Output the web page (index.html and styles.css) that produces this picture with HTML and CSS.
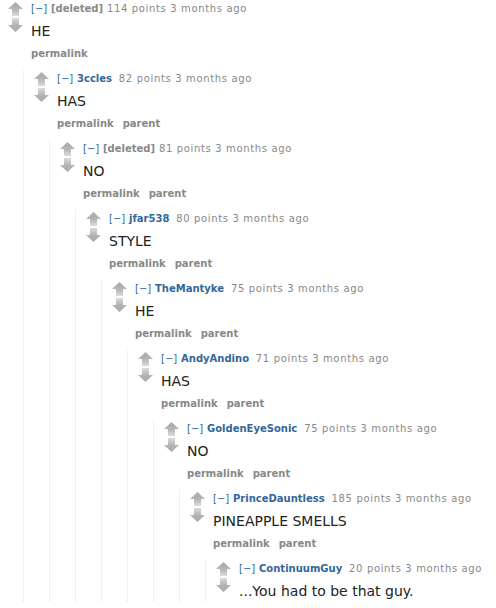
FILE: index.html
```html
<!DOCTYPE html>
<html lang="en">
<head>
  <meta charset="UTF-8" />
  <meta name="viewport" content="width=device-width, initial-scale=1.0"/>
  <title>Comment thread</title>
  <link rel="stylesheet" href="styles.css">
</head>
<body>
  <svg width="0" height="0" class="defs">
    <defs>
      <linearGradient id="upGrad" x1="0" y1="0" x2="0" y2="1">
        <stop offset="0" stop-color="#a9a9a9"/>
        <stop offset="0.5" stop-color="#b4b4b4"/>
        <stop offset="1" stop-color="#dcdcdc"/>
      </linearGradient>
      <linearGradient id="downGrad" x1="0" y1="0" x2="0" y2="1">
        <stop offset="0" stop-color="#dcdcdc"/>
        <stop offset="0.5" stop-color="#b4b4b4"/>
        <stop offset="1" stop-color="#a9a9a9"/>
      </linearGradient>
      <symbol id="up" viewBox="0 0 15 14">
        <polygon points="7.5,0 15,7 11,7 11,14 4,14 4,7 0,7" fill="url(#upGrad)"/>
      </symbol>
      <symbol id="down" viewBox="0 0 15 14">
        <polygon points="4,0 11,0 11,7 15,7 7.5,14 0,7 4,7" fill="url(#downGrad)"/>
      </symbol>
    </defs>
  </svg>

  <div class="thread" id="thread"></div>

  <script>
    // comment chain, each one replies to the one before
    const comments = [
      { author: null, points: 114, body: 'HE' },
      { author: '3ccles', points: 82, body: 'HAS' },
      { author: null, points: 81, body: 'NO' },
      { author: 'jfar538', points: 80, body: 'STYLE' },
      { author: 'TheMantyke', points: 75, body: 'HE' },
      { author: 'AndyAndino', points: 71, body: 'HAS' },
      { author: 'GoldenEyeSonic', points: 75, body: 'NO' },
      { author: 'PrinceDauntless', points: 185, body: 'PINEAPPLE SMELLS' },
      { author: 'ContinuumGuy', points: 20, body: '...You had to be that guy.' }
    ];

    function renderComment(i) {
      const c = comments[i];
      const last = i === comments.length - 1;
      const who = c.author
        ? `<a class="author">${c.author}</a>`
        : `<span class="deleted">[deleted]</span>`;
      let links = '';
      if (!last) {
        links = i === 0
          ? '<ul class="buttons"><li>permalink</li></ul>'
          : '<ul class="buttons"><li>permalink</li><li>parent</li></ul>';
      }
      const child = last ? '' : `<div class="child">${renderComment(i + 1)}</div>`;
      return `
        <div class="comment">
          <div class="thing">
            <div class="midcol">
              <svg class="arrow"><use href="#up"/></svg>
              <svg class="arrow"><use href="#down"/></svg>
            </div>
            <div class="entry">
              <p class="tagline"><a class="expand">[&minus;]</a> ${who} <span class="score">${c.points} points</span> 3 months ago</p>
              <div class="md">${c.body}</div>
              ${links}
            </div>
          </div>
          ${child}
        </div>`;
    }

    document.getElementById('thread').innerHTML = renderComment(0);
  </script>
</body>
</html>
```

FILE: styles.css
```css
html { overflow: hidden; }
body {
  margin: 0; background: #fff; color: #222;
  font-family: "DejaVu Sans", Verdana, sans-serif;
}
.defs { position: absolute; }
.thread { padding: 0 8px; }

.thing { display: flex; padding-top: 1px; }
.midcol { width: 15px; padding-top: 1px; display: flex; flex-direction: column; gap: 2px; }
.arrow { width: 15px; height: 14px; display: block; }
.entry { margin-left: 8px; }

.tagline {
  margin: 0; padding-top: 1px; font-size: 10px; line-height: 14px; color: #888;
  white-space: nowrap; letter-spacing: 0.65px;
}
.expand { color: #369; letter-spacing: 0; }
.author { color: #369; font-weight: bold; margin-right: 0.3em; letter-spacing: 0; }
.deleted { color: #888; font-weight: bold; letter-spacing: 0; }

.md {
  margin-top: 5px; font-size: 14px; line-height: 20px;
  color: #222; white-space: nowrap;
}

.buttons {
  list-style: none; margin: 6px 0 0; padding: 0; display: flex; gap: 9px;
  font-size: 10px; line-height: 14px; font-weight: bold; color: #888;
}

.child {
  margin-top: 9px; margin-left: 15px; padding-left: 10px;
  border-left: 1px dotted #ddf;
}
```
